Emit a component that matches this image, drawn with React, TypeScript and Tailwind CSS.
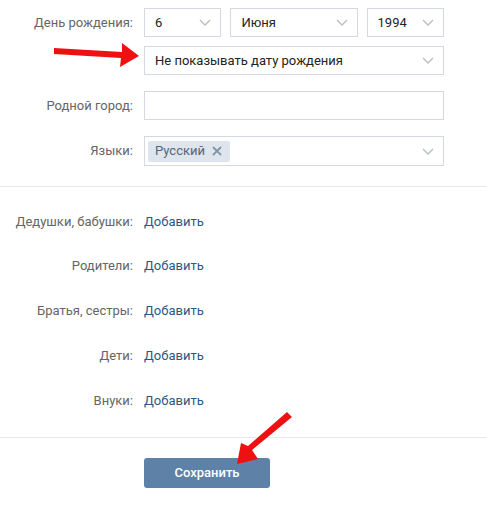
import React from "react";

const Chevron = () => (
  <svg width="12" height="7" viewBox="0 0 12 7" className="shrink-0">
    <path d="M1 1 L6 6 L11 1" fill="none" stroke="#b5bcc5" strokeWidth="1.3" />
  </svg>
);

const Select = ({ value, className }: { value: string; className: string }) => (
  <div
    className={`flex h-[29px] items-center justify-between border border-[#d3d9de] bg-white pl-[10px] pr-[9px] text-[13px] text-[#222] ${className}`}
  >
    <span>{value}</span>
    <Chevron />
  </div>
);

const Row = ({ label, children, className = "" }: { label: string; children?: React.ReactNode; className?: string }) => (
  <div className={`flex items-center ${className}`}>
    <div className="w-[134px] shrink-0 pr-[1px] text-right text-[13px] text-[#656565]">{label}</div>
    <div className="ml-[10px] flex w-[300px] gap-[9px]">{children}</div>
  </div>
);

const family = ["Дедушки, бабушки:", "Родители:", "Братья, сестры:", "Дети:", "Внуки:"];

export default function App() {
  return (
    <div
      className="relative h-[505px] w-[487px] overflow-hidden bg-white"
      style={{ fontFamily: "Roboto, 'Open Sans', Arial, sans-serif" }}
    >
      <div className="pt-[8px]">
        <Row label="День рождения:">
          <Select value="6" className="w-[78px]" />
          <Select value="Июня" className="w-[128px]" />
          <Select value="1994" className="w-[78px]" />
        </Row>
        <Row label="" className="mt-[9px]">
          <Select value="Не показывать дату рождения" className="w-[300px]" />
        </Row>
        <Row label="Родной город:" className="mt-[16px]">
          <div className="h-[29px] w-[300px] border border-[#d3d9de] bg-white" />
        </Row>
        <Row label="Языки:" className="mt-[16px]">
          <div className="flex h-[30px] w-[300px] items-center justify-between border border-[#d3d9de] bg-white pl-[3px] pr-[9px]">
            <div className="flex h-[21px] w-[82px] items-center gap-[7px] rounded-[2px] bg-[#dee5ec] pl-[7px] text-[13px] text-[#55677d]">
              <span>Русский</span>
              <svg width="10" height="10" viewBox="0 0 10 10">
                <path d="M1 1 L9 9 M9 1 L1 9" stroke="#8595a6" strokeWidth="1.8" />
              </svg>
            </div>
            <Chevron />
          </div>
        </Row>
      </div>

      <div className="mt-[20px] h-px w-full bg-[#e7e8ec]" />

      <div className="pb-[14px] pt-[12px]">
        {family.map((f) => (
          <div key={f} className="flex h-[44.75px] items-center">
            <div className="w-[134px] shrink-0 pr-[1px] text-right text-[13px] text-[#656565]">{f}</div>
            <div className="ml-[10px] text-[13px] text-[#2a5885]">Добавить</div>
          </div>
        ))}
      </div>

      <div className="h-px w-full bg-[#e7e8ec]" />

      <div className="pl-[144px] pt-[20px]">
        <button className="flex h-[30px] w-[126px] items-center justify-center rounded-[3px] bg-[#5e81a8] text-[13px] font-medium text-white">
          Сохранить
        </button>
      </div>

      <svg className="pointer-events-none absolute inset-0" width="487" height="505" viewBox="0 0 487 505">
        <path d="M54 48 L122 52 L122 43 L139 56 L120 67 L121 58 L54 54 Z" fill="#ee1111" />
        <path
          d="M287 412 L292 417 L252 450 L258 459 L237 464 L241 443 L248 446 Z"
          fill="#ee1111"
        />
      </svg>
    </div>
  );
}
